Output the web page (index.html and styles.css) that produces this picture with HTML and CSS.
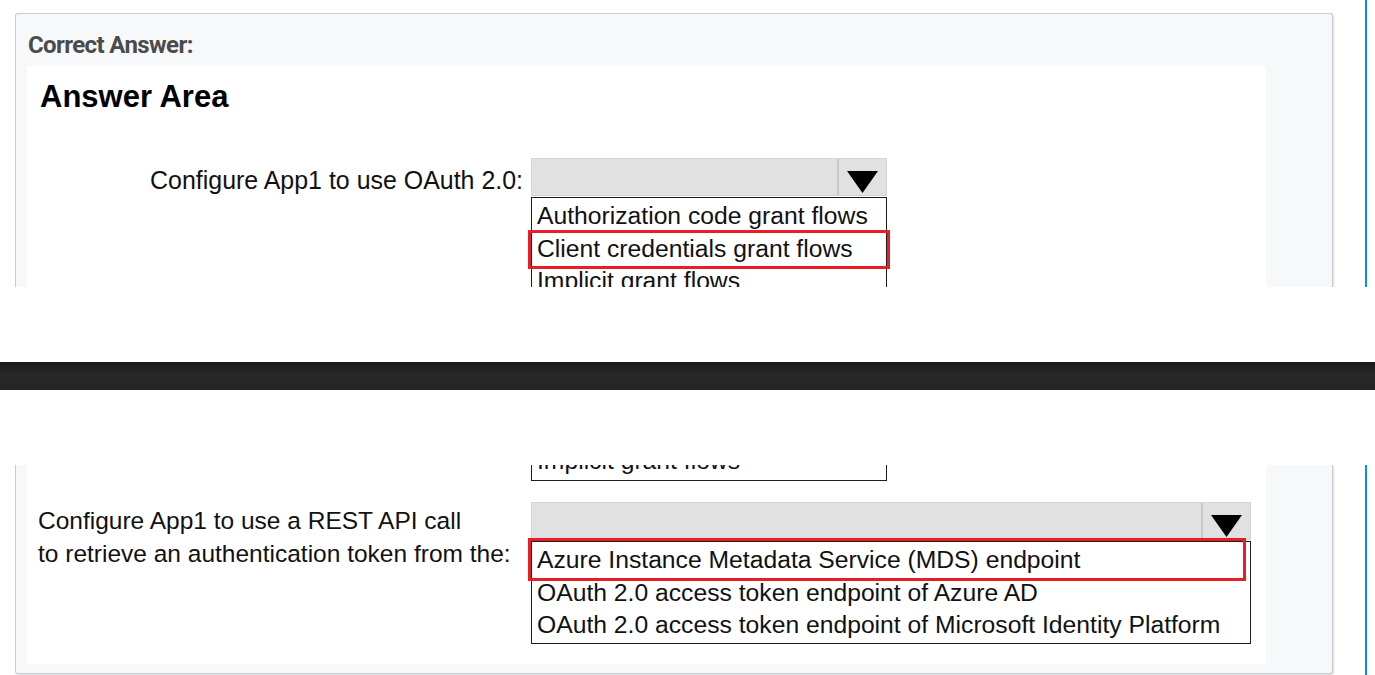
FILE: index.html
```html
<!DOCTYPE html>
<html lang="en">
<head>
<meta charset="utf-8">
<title>Correct Answer</title>
<link rel="stylesheet" href="styles.css">
</head>
<body>
<div class="shot">
  <section class="pane pane-top">
    <div class="card card-head">
      <div class="card-title">Correct Answer:</div>
      <div class="panel">
        <h2 class="area-title">Answer Area</h2>
        <div class="qa qa-first">
          <div class="label label-right">Configure App1 to use OAuth 2.0:</div>
          <div class="drop drop-narrow">
            <div class="select">
              <div class="select-field"></div>
              <div class="select-btn">
                <svg viewBox="0 0 31 22" aria-hidden="true"><polygon points="0,0 31,0 15.5,22" fill="#000"/></svg>
              </div>
            </div>
            <ul class="list">
              <li class="opt">Authorization code grant flows</li>
              <li class="opt marked">Client credentials grant flows</li>
              <li class="opt">Implicit grant flows</li>
            </ul>
          </div>
        </div>
      </div>
    </div>
    <div class="rail"></div>
  </section>

  <div class="cut"><div class="cut-bar"></div></div>

  <section class="pane pane-bottom">
    <div class="card card-cont">
      <div class="panel panel-cont">
        <ul class="list list-tail">
          <li class="opt opt-tail">Implicit grant flows</li>
        </ul>
        <div class="qa qa-second">
          <div class="label label-left">Configure App1 to use a REST API call<br>to retrieve an authentication token from the:</div>
          <div class="drop drop-wide">
            <div class="select">
              <div class="select-field"></div>
              <div class="select-btn">
                <svg viewBox="0 0 31 22" aria-hidden="true"><polygon points="0,0 31,0 15.5,22" fill="#000"/></svg>
              </div>
            </div>
            <ul class="list list-second">
              <li class="opt marked marked-wide">Azure Instance Metadata Service (MDS) endpoint</li>
              <li class="opt">OAuth 2.0 access token endpoint of Azure AD</li>
              <li class="opt">OAuth 2.0 access token endpoint of Microsoft Identity Platform</li>
            </ul>
          </div>
        </div>
      </div>
    </div>
    <div class="rail"></div>
  </section>
</div>
</body>
</html>
```
FILE: styles.css
```css
* {
  box-sizing: border-box;
}

html, body {
  margin: 0;
  padding: 0;
  background: #ffffff;
}

body {
  font-family: "Liberation Sans", Arial, sans-serif;
  color: #111111;
}

.pane {
  display: flex;
  padding-left: 15px;
  overflow: hidden;
}

.pane-top {
  height: 287px;
}

.pane-bottom {
  height: 210px;
}

.card {
  flex: none;
  width: 1318px;
  align-self: flex-start;
  background: #f7f8fa;
  border: 1px solid #c8cbcf;
  box-shadow: 1px 1px 2px rgba(0, 0, 0, 0.14);
  padding: 0 66px 0 11px;
}

.card-head {
  margin-top: 13px;
  border-bottom: 0;
  border-radius: 3px 3px 0 0;
}

.card-cont {
  border-top: 0;
  border-radius: 0 0 3px 3px;
  padding-bottom: 9px;
}

.card-title {
  font-family: Roboto, "Liberation Sans", sans-serif;
  font-weight: 700;
  font-size: 24px;
  line-height: 24px;
  letter-spacing: -0.6px;
  color: #4b4b4b;
  padding: 19px 0 9px 1px;
}

.panel {
  background: #ffffff;
  padding: 14px 0 0 11px;
}

.panel-cont {
  padding: 0 0 20px 11px;
}

.area-title {
  margin: 0 0 0 2px;
  font-size: 31px;
  line-height: 34px;
  font-weight: 700;
  color: #000000;
}

.qa {
  display: grid;
  grid-template-columns: 493px auto;
  align-items: start;
  justify-items: start;
}

.qa-first {
  margin-top: 44px;
}

.qa-second {
  margin-top: 21px;
}

.label {
  font-size: 24.5px;
  line-height: 32.5px;
  color: #111111;
  white-space: nowrap;
}

.label-right {
  justify-self: stretch;
  text-align: right;
  font-size: 24.95px;
  padding-right: 8px;
  margin-top: 5.5px;
}

.label-left {
  margin-top: 3.3px;
}

.drop-narrow {
  width: 356px;
}

.drop-wide {
  width: 720px;
}

.select {
  display: flex;
  height: 38px;
  background: #e1e1e1;
  border: 1px solid #d3d3d3;
}

.select-field {
  flex: 1;
}

.select-btn {
  flex: none;
  width: 49px;
  border-left: 2px solid #c6c6c6;
  padding: 12px 0 0 8px;
}

.select-btn svg {
  display: block;
  width: 31px;
  height: 22px;
}

.list {
  list-style: none;
  margin: 1px 0 0;
  padding: 2px 0 0;
  border: 1px solid #1c1c1c;
  background: #ffffff;
}

.list-second {
  padding: 2px 0 1px;
}

.opt {
  position: relative;
  font-size: 24.7px;
  line-height: 32.5px;
  padding-left: 5px;
  white-space: nowrap;
  color: #111111;
}

.marked::after {
  content: "";
  position: absolute;
  left: -4px;
  right: -4px;
  top: -2.5px;
  bottom: -4px;
  border: 3px solid #e61e27;
}

.marked-wide::after {
  top: -6px;
  right: 4px;
  bottom: -4px;
}

.list-tail {
  width: 356px;
  height: 16px;
  margin: 0 0 0 493px;
  padding: 0;
  border-top: 0;
  overflow: hidden;
}

.opt-tail {
  margin-top: -20px;
}

.cut {
  height: 178px;
  padding-top: 75px;
}

.cut-bar {
  height: 28px;
  background: linear-gradient(#191919, #282828 45%, #242424);
}

.rail {
  flex: none;
  width: 2px;
  margin-left: 32px;
  background: #0b8de6;
}
```
